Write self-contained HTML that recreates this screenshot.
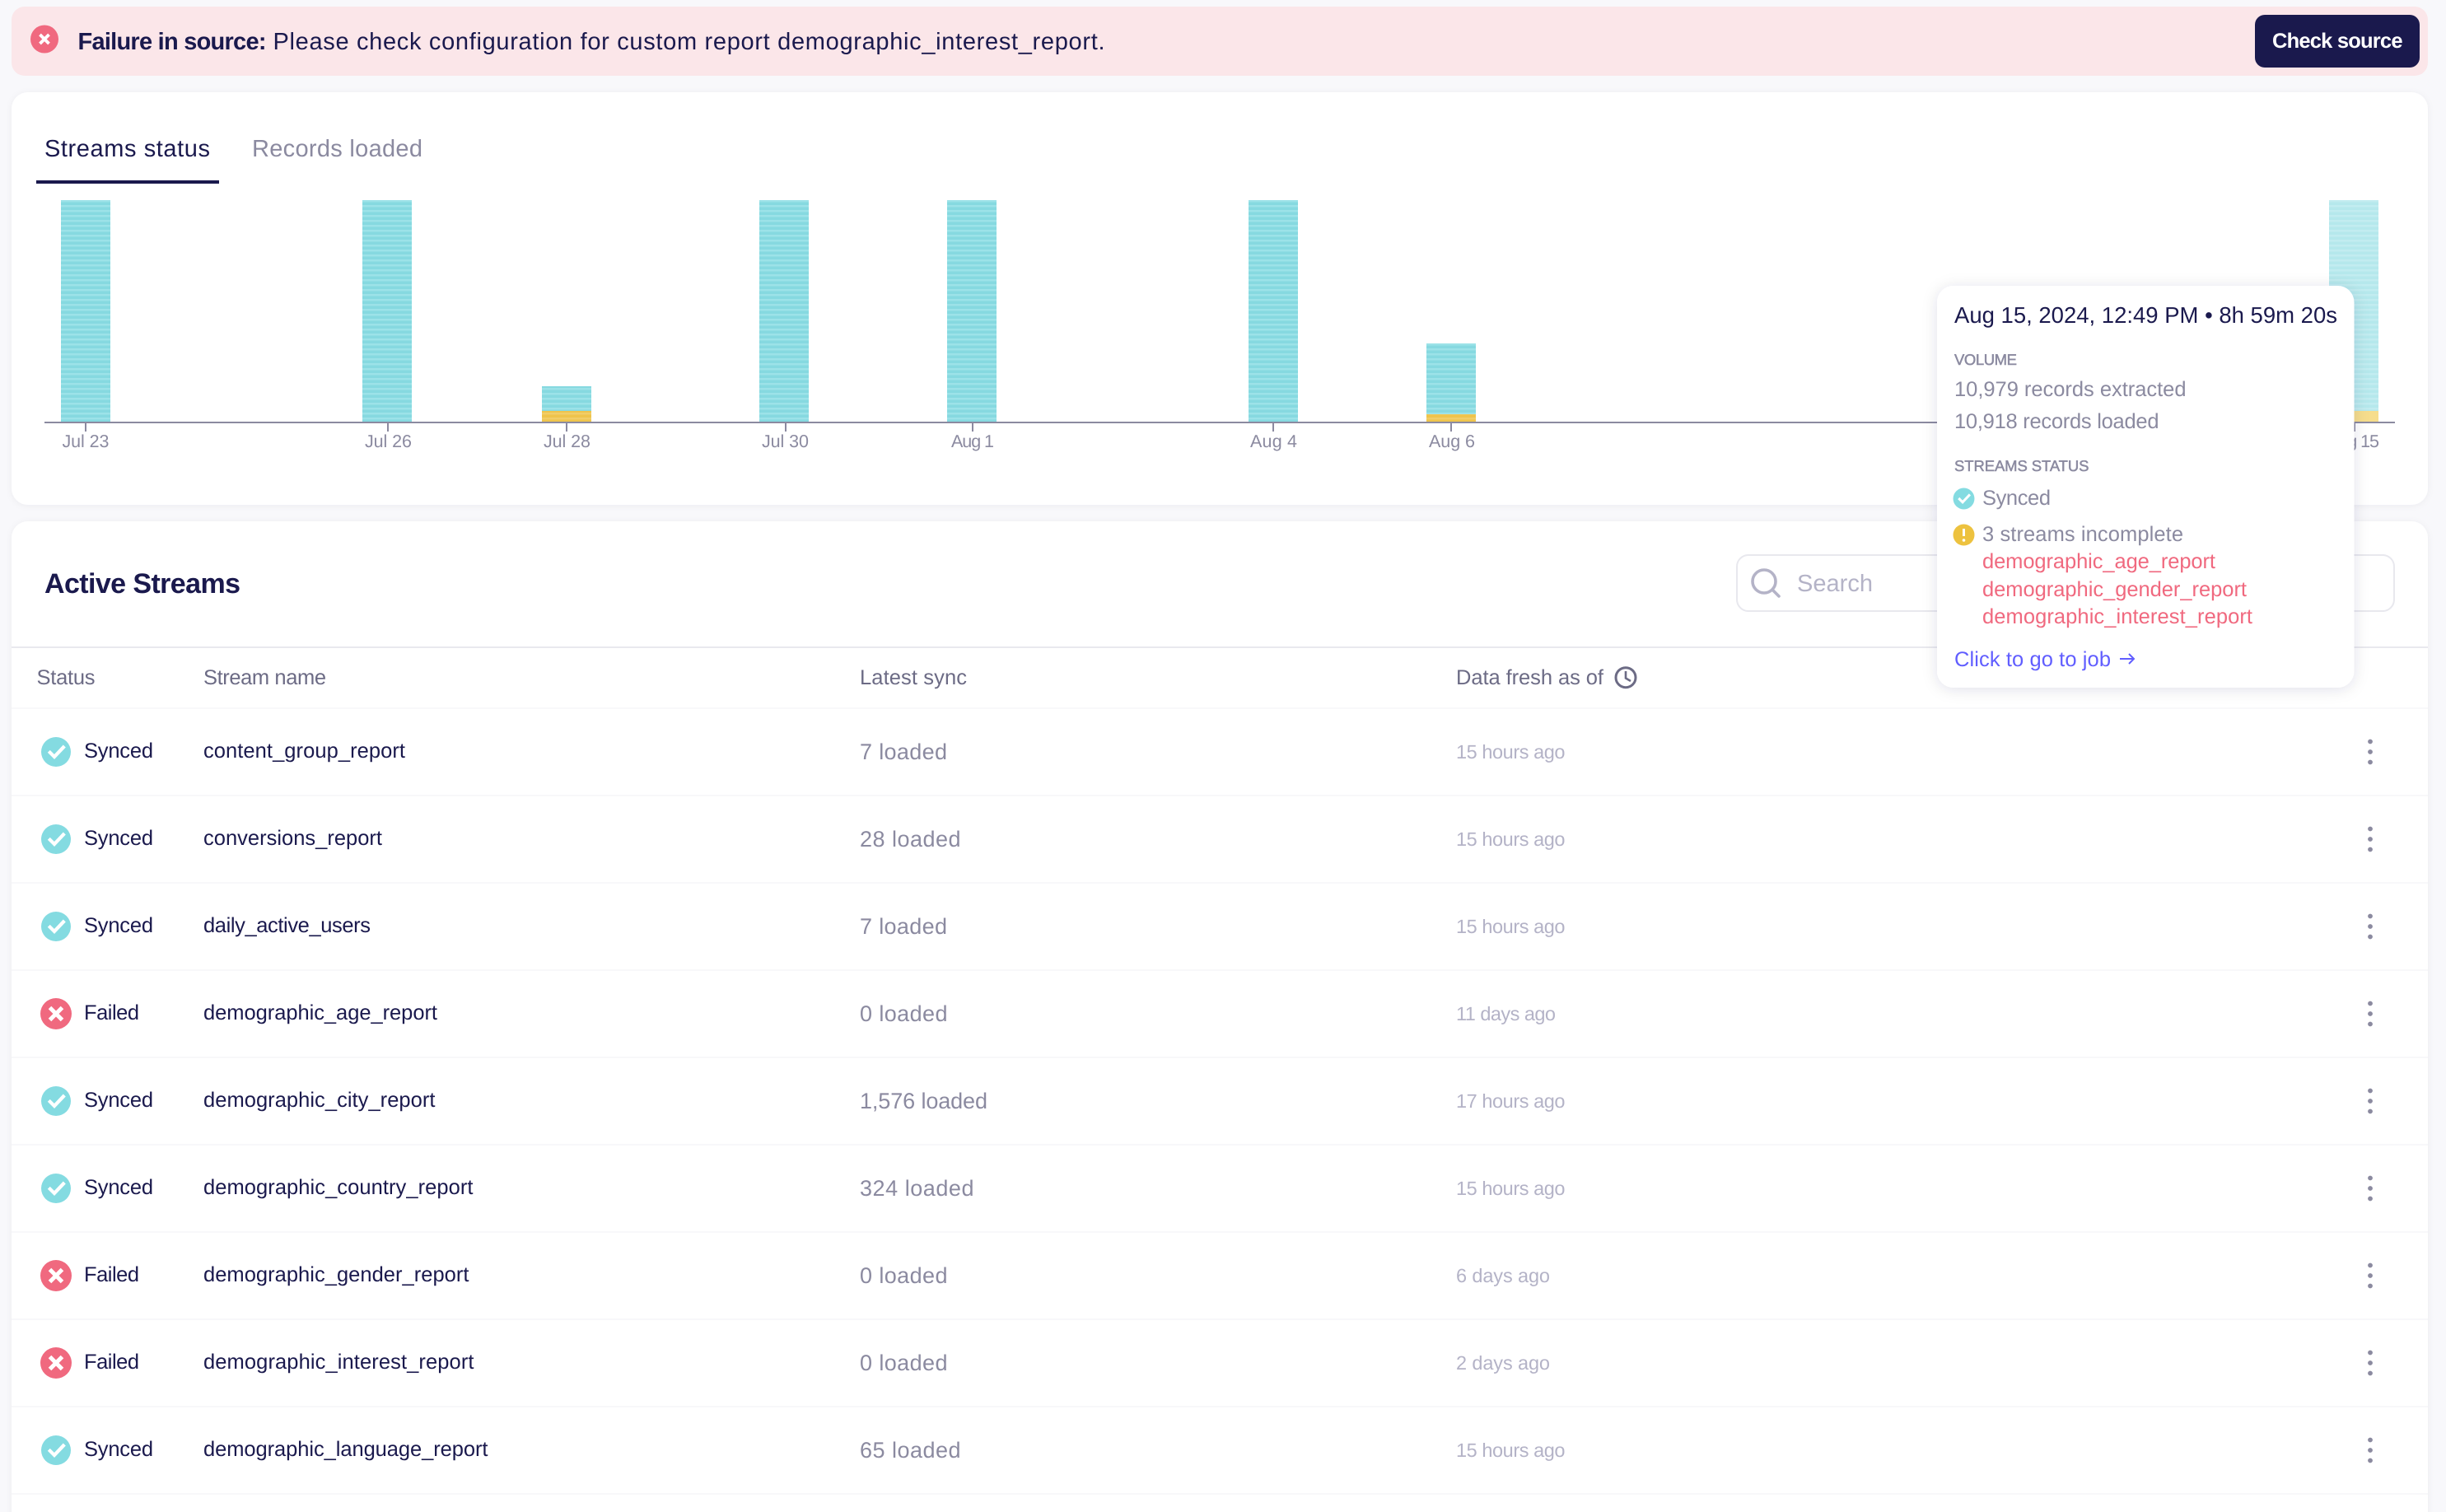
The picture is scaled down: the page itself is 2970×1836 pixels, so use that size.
<!DOCTYPE html>
<html><head><meta charset="utf-8"><title>Streams</title>
<style>
html,body{margin:0;padding:0;width:2970px;height:1836px;overflow:hidden;background:#f8f8fb}
svg{display:block;position:absolute;left:0;top:0}
text{font-family:"Liberation Sans",sans-serif;fill:#1a194d;text-rendering:geometricPrecision}
.ax{font-size:21.5px;fill:#8b8aa0}
.st{font-size:25.5px}
.hd{font-size:25.5px;fill:#6c6b85}
.ld{font-size:27px;fill:#8b8aa0}
.fr{font-size:23.5px;fill:#b4b3c7}
.tt{font-size:25.5px;fill:#8b8aa0}
.lb{font-size:18.5px;fill:#8b8aa0;stroke:#8b8aa0;stroke-width:.5px}
.rd{font-size:25.5px;fill:#f0697f}
</style></head><body>
<svg width="2970" height="1836" viewBox="0 0 2970 1836" xmlns="http://www.w3.org/2000/svg">
<defs>
<pattern id="s" patternUnits="userSpaceOnUse" x="0" y="243" width="10" height="6"><rect width="10" height="6" fill="#86d9e0"/><rect y="0" width="10" height="2.500" fill="#9ce2e8"/></pattern>
<pattern id="y" patternUnits="userSpaceOnUse" x="0" y="243" width="10" height="6"><rect width="10" height="6" fill="#eec44c"/><rect y="0" width="10" height="2.500" fill="#f1cd68"/></pattern>
<pattern id="s2" patternUnits="userSpaceOnUse" x="0" y="243" width="10" height="6"><rect width="10" height="6" fill="#b5e8ec"/><rect y="0" width="10" height="2.500" fill="#c2ecf0"/></pattern>
<filter id="cs" x="-2%" y="-5%" width="104%" height="110%"><feDropShadow dx="0" dy="1" stdDeviation="4" flood-color="#1a194d" flood-opacity=".05"/></filter>
<filter id="ts" x="-10%" y="-10%" width="120%" height="120%"><feDropShadow dx="0" dy="2" stdDeviation="9" flood-color="#1a194d" flood-opacity=".12"/></filter>
<g id="ok"><circle cx="0" cy="0" r="18" fill="#84dbe1"/><path d="M-8.7-.7L-2 6 10.300-7" fill="none" stroke="#fff" stroke-width="4.200"/></g>
<g id="no"><circle cx="0" cy="0" r="19" fill="#f0697f"/><path d="M-7.500-7.500L7.500 7.500M7.500-7.500L-7.500 7.500" fill="none" stroke="#fff" stroke-width="5"/></g>
<g id="kb" fill="#8b8aa0"><circle cx="0" cy="-12.500" r="2.900"/><circle cx="0" cy="0" r="2.900"/><circle cx="0" cy="12.500" r="2.900"/></g>
</defs>

<!-- banner -->
<rect x="14" y="8" width="2934" height="84" rx="16" fill="#fbe6e9"/>
<circle cx="54" cy="47.500" r="17" fill="#f0697f"/>
<path d="M48.500 42L59.500 53M59.500 42L48.500 53" stroke="#fff" stroke-width="3.800" fill="none"/>
<text x="94.500" y="60" font-weight="700" textLength="229" style="font-size:29px">Failure in source:</text>
<text x="331.500" y="60" textLength="1010" style="font-size:29px">Please check configuration for custom report demographic_interest_report.</text>
<rect x="2738" y="18" width="200" height="64" rx="12" fill="#1a194d"/>
<text x="2759" y="58" textLength="158.500" style="font-size:25.500px;font-weight:700;fill:#fff">Check source</text>

<!-- chart card -->
<rect x="14" y="112" width="2934" height="501" rx="20" fill="#fff" filter="url(#cs)"/>
<text x="54" y="190" textLength="201" style="font-size:29px">Streams status</text>
<text x="306" y="190" textLength="207" style="font-size:29px;fill:#8b8aa0">Records loaded</text>
<rect x="44" y="219" width="222" height="4" fill="#1a194d"/>

<rect x="74" y="243" width="60" height="269" fill="url(#s)"/>
<rect x="440" y="243" width="60" height="269" fill="url(#s)"/>
<rect x="658" y="469" width="60" height="30" fill="url(#s)"/><rect x="658" y="499" width="60" height="13" fill="url(#y)"/>
<rect x="922" y="243" width="60" height="269" fill="url(#s)"/>
<rect x="1150" y="243" width="60" height="269" fill="url(#s)"/>
<rect x="1516" y="243" width="60" height="269" fill="url(#s)"/>
<rect x="1732" y="417" width="60" height="86" fill="url(#s)"/><rect x="1732" y="503" width="60" height="9" fill="url(#y)"/>
<rect x="2828" y="243" width="60" height="256" fill="url(#s2)"/><rect x="2828" y="499" width="60" height="13" fill="#f6dd8c"/>

<rect x="54" y="512" width="2854" height="2" fill="#8b8aa0"/>
<g fill="#8b8aa0"><rect x="103" y="514" width="2" height="10"/><rect x="470" y="514" width="2" height="10"/><rect x="687" y="514" width="2" height="10"/><rect x="953" y="514" width="2" height="10"/><rect x="1180" y="514" width="2" height="10"/><rect x="1545" y="514" width="2" height="10"/><rect x="1761" y="514" width="2" height="10"/><rect x="2858" y="514" width="2" height="10"/></g>
<text class="ax" x="75.500" y="543" textLength="57">Jul 23</text>
<text class="ax" x="443" y="543" textLength="57">Jul 26</text>
<text class="ax" x="660" y="543" textLength="57">Jul 28</text>
<text class="ax" x="925" y="543" textLength="57">Jul 30</text>
<text class="ax" x="1155" y="543" textLength="52">Aug 1</text>
<text class="ax" x="1518" y="543" textLength="57">Aug 4</text>
<text class="ax" x="1735" y="543" textLength="56">Aug 6</text>
<text class="ax" x="2826" y="543" textLength="63">Aug 15</text>

<!-- streams card -->
<rect x="14" y="633" width="2934" height="1260" rx="20" fill="#fff" filter="url(#cs)"/>
<text x="54" y="720" textLength="238" style="font-size:34px;font-weight:700">Active Streams</text>
<rect x="2109" y="674" width="798" height="68" rx="14" fill="#fff" stroke="#e8e8ee" stroke-width="2"/>
<circle cx="2142" cy="706" r="14" fill="none" stroke="#b4b3c7" stroke-width="3.600"/>
<path d="M2152 716L2160 724" stroke="#b4b3c7" stroke-width="3.600" stroke-linecap="round"/>
<text x="2182" y="718" textLength="92" style="font-size:29px;fill:#b4b3c7">Search</text>

<rect x="14" y="785" width="2934" height="2" fill="#e9e9ee"/>
<text class="hd" x="44.500" y="831" textLength="71">Status</text>
<text class="hd" x="247" y="831" textLength="149">Stream name</text>
<text class="hd" x="1044" y="831" textLength="130">Latest sync</text>
<text class="hd" x="1768" y="831" textLength="179">Data fresh as of</text>
<circle cx="1974" cy="822.700" r="12" fill="none" stroke="#6c6b85" stroke-width="3"/>
<path d="M1974 815V823.500L1980 827" fill="none" stroke="#6c6b85" stroke-width="2.600"/>

<g fill="#f8f8fa"><rect x="14" y="859" width="2934" height="2"/><rect x="14" y="965" width="2934" height="2"/><rect x="14" y="1071" width="2934" height="2"/><rect x="14" y="1177" width="2934" height="2"/><rect x="14" y="1283" width="2934" height="2"/><rect x="14" y="1389" width="2934" height="2"/><rect x="14" y="1495" width="2934" height="2"/><rect x="14" y="1601" width="2934" height="2"/><rect x="14" y="1707" width="2934" height="2"/><rect x="14" y="1813" width="2934" height="2"/></g>

<!-- rows -->
<use href="#ok" x="68" y="913"/><text class="st" x="102" y="920" textLength="84">Synced</text><text class="st" x="247" y="920" textLength="245">content_group_report</text><text class="ld" x="1044" y="922" textLength="106">7 loaded</text><text class="fr" x="1768" y="921" textLength="132.500">15 hours ago</text><use href="#kb" x="2878" y="913"/>
<use href="#ok" x="68" y="1019"/><text class="st" x="102" y="1026" textLength="84">Synced</text><text class="st" x="247" y="1026" textLength="217">conversions_report</text><text class="ld" x="1044" y="1028" textLength="122.500">28 loaded</text><text class="fr" x="1768" y="1027" textLength="132.500">15 hours ago</text><use href="#kb" x="2878" y="1019"/>
<use href="#ok" x="68" y="1125"/><text class="st" x="102" y="1132" textLength="84">Synced</text><text class="st" x="247" y="1132" textLength="203">daily_active_users</text><text class="ld" x="1044" y="1134" textLength="106">7 loaded</text><text class="fr" x="1768" y="1133" textLength="132.500">15 hours ago</text><use href="#kb" x="2878" y="1125"/>
<use href="#no" x="68" y="1231"/><text class="st" x="102" y="1238" textLength="67">Failed</text><text class="st" x="247" y="1238" textLength="284">demographic_age_report</text><text class="ld" x="1044" y="1240" textLength="106.500">0 loaded</text><text class="fr" x="1768" y="1239" textLength="121">11 days ago</text><use href="#kb" x="2878" y="1231"/>
<use href="#ok" x="68" y="1337"/><text class="st" x="102" y="1344" textLength="84">Synced</text><text class="st" x="247" y="1344" textLength="281.500">demographic_city_report</text><text class="ld" x="1044" y="1346" textLength="155">1,576 loaded</text><text class="fr" x="1768" y="1345" textLength="132.500">17 hours ago</text><use href="#kb" x="2878" y="1337"/>
<use href="#ok" x="68" y="1443"/><text class="st" x="102" y="1450" textLength="84">Synced</text><text class="st" x="247" y="1450" textLength="327.500">demographic_country_report</text><text class="ld" x="1044" y="1452" textLength="138.500">324 loaded</text><text class="fr" x="1768" y="1451" textLength="132.500">15 hours ago</text><use href="#kb" x="2878" y="1443"/>
<use href="#no" x="68" y="1549"/><text class="st" x="102" y="1556" textLength="67">Failed</text><text class="st" x="247" y="1556" textLength="322.500">demographic_gender_report</text><text class="ld" x="1044" y="1558" textLength="106.500">0 loaded</text><text class="fr" x="1768" y="1557" textLength="114">6 days ago</text><use href="#kb" x="2878" y="1549"/>
<use href="#no" x="68" y="1655"/><text class="st" x="102" y="1662" textLength="67">Failed</text><text class="st" x="247" y="1662" textLength="328.500">demographic_interest_report</text><text class="ld" x="1044" y="1664" textLength="106.500">0 loaded</text><text class="fr" x="1768" y="1663" textLength="114">2 days ago</text><use href="#kb" x="2878" y="1655"/>
<use href="#ok" x="68" y="1761"/><text class="st" x="102" y="1768" textLength="84">Synced</text><text class="st" x="247" y="1768" textLength="345.500">demographic_language_report</text><text class="ld" x="1044" y="1770" textLength="122.500">65 loaded</text><text class="fr" x="1768" y="1769" textLength="132.500">15 hours ago</text><use href="#kb" x="2878" y="1761"/>

<!-- tooltip -->
<rect x="2352" y="347" width="506.500" height="488" rx="20" fill="#fff" filter="url(#ts)"/>
<text x="2373" y="392" textLength="465" style="font-size:27.500px">Aug 15, 2024, 12:49 PM • 8h 59m 20s</text>
<text class="lb" x="2373" y="443" textLength="76">VOLUME</text>
<text class="tt" x="2373" y="481" textLength="281.500">10,979 records extracted</text>
<text class="tt" x="2373" y="520" textLength="248.500">10,918 records loaded</text>
<text class="lb" x="2373" y="572" textLength="163.500">STREAMS STATUS</text>
<g transform="translate(2384.500 605.500) scale(.72)"><use href="#ok"/></g>
<text class="tt" x="2407" y="613" textLength="83">Synced</text>
<circle cx="2384.500" cy="649.500" r="13" fill="#edc23f"/>
<path d="M2384.500 642V651" stroke="#fff" stroke-width="3"/><circle cx="2384.500" cy="656" r="1.800" fill="#fff"/>
<text class="tt" x="2407" y="657" textLength="244">3 streams incomplete</text>
<text class="rd" x="2407" y="690" textLength="283">demographic_age_report</text>
<text class="rd" x="2407" y="724" textLength="321">demographic_gender_report</text>
<text class="rd" x="2407" y="757" textLength="328">demographic_interest_report</text>
<text x="2373" y="809" textLength="190" style="font-size:25.500px;fill:#615eff">Click to go to job</text>
<path d="M2574 800H2591M2585 794L2591 800L2585 806" fill="none" stroke="#615eff" stroke-width="2"/>
</svg>
</body></html>
